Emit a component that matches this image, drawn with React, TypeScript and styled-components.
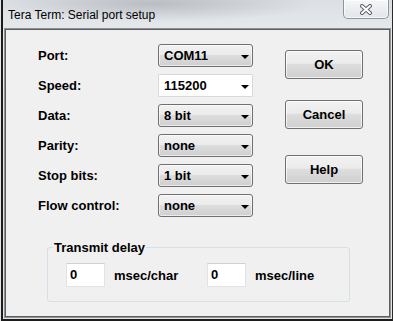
import React from "react";
import styled, { createGlobalStyle } from "styled-components";

const Global = createGlobalStyle`
  html, body { margin: 0; padding: 0; background: #e4e7ea; }
  body { font-family: "Liberation Sans", Arial, sans-serif; }
  * { box-sizing: border-box; }
`;

const Window = styled.div`
  width: 392px;
  height: 321px;
  margin-left: 1px;
  display: flex;
  flex-direction: column;
  border-left: 2px solid #1c1c1c;
  border-right: 1px solid #2a2a2a;
  border-bottom: 2px solid #1c1c1c;
  background:
    radial-gradient(ellipse 160px 18px at 150px 4px, rgba(120, 124, 130, 0.35), rgba(120, 124, 130, 0) 100%),
    linear-gradient(#dcdfe3 0px, #e6e9ec 30px, #e2e5e8 100%);
`;

const TitleBar = styled.div`
  height: 29px;
  flex: none;
  display: flex;
  align-items: flex-start;
  justify-content: space-between;
  padding-left: 5px;
  padding-right: 3px;
`;

const Title = styled.div`
  margin-top: 8px;
  font-size: 12px;
  line-height: 14px;
  color: #000;
`;

const CloseButton = styled.div`
  width: 46px;
  height: 19px;
  display: flex;
  align-items: center;
  justify-content: center;
  border: 1px solid #8e949b;
  border-top: none;
  border-radius: 0 0 5px 5px;
  background: linear-gradient(#f6f7f8, #e9ecef 60%, #e2e5e9);
  box-shadow: inset 0 0 0 1px rgba(255, 255, 255, 0.7);
`;

const Client = styled.div`
  flex: 1;
  margin: 0 2px 2px 2px;
  border: 1px solid #5e5e5e;
  box-shadow: 0 0 0 1px #8f9296;
  background: #f0f0f0;
  padding: 14px 0 0 32px;
  display: flex;
  flex-direction: column;
  font-size: 13px;
  font-weight: bold;
  color: #000;
`;

const TopSection = styled.div`
  display: flex;
  align-items: flex-start;
`;

const Form = styled.div`
  display: grid;
  grid-template-columns: 120px 95px;
  grid-auto-rows: 23px;
  row-gap: 7px;
  align-items: center;
`;

const Label = styled.div`
  line-height: 15px;
`;

const Combo = styled.div<{ $edit?: boolean }>`
  height: 23px;
  display: flex;
  align-items: center;
  justify-content: space-between;
  padding: 0 3px 0 5px;
  line-height: 15px;
  border: 1px solid ${(p) => (p.$edit ? "#d6d9de" : "#707070")};
  border-radius: ${(p) => (p.$edit ? "1px" : "3px")};
  background: ${(p) =>
    p.$edit
      ? "#ffffff"
      : "linear-gradient(#f2f2f2 0%, #ebebeb 45%, #dddddd 50%, #cfcfcf 100%)"};
  box-shadow: ${(p) => (p.$edit ? "none" : "inset 0 0 0 1px rgba(255,255,255,0.6)")};
`;

const Arrow = styled.span`
  width: 0;
  height: 0;
  margin-top: 2px;
  border-left: 4px solid transparent;
  border-right: 4px solid transparent;
  border-top: 4px solid #000;
`;

const Buttons = styled.div`
  display: flex;
  flex-direction: column;
  margin-left: 32px;
`;

const Button = styled.div<{ $gap: number }>`
  width: 78px;
  height: 29px;
  margin-top: ${(p) => p.$gap}px;
  display: flex;
  align-items: center;
  justify-content: center;
  border: 1px solid #707070;
  border-radius: 3px;
  background: linear-gradient(#f2f2f2 0%, #ebebeb 45%, #dddddd 50%, #cfcfcf 100%);
  box-shadow: inset 0 0 0 1px rgba(255, 255, 255, 0.7);
`;

const Group = styled.fieldset`
  margin: 23px 0 0 9px;
  width: 303px;
  height: 62px;
  padding: 0 0 0 5px;
  border: 1px solid #d5dfe5;
  border-radius: 3px;
  min-width: 0;
`;

const Legend = styled.legend`
  padding: 0 1px;
  line-height: 15px;
`;

const DelayRow = styled.div`
  display: grid;
  grid-template-columns: 141px auto;
  margin: 8px 0 0 13px;
`;

const DelayField = styled.div`
  display: flex;
  align-items: center;
  gap: 9px;
`;

const Edit = styled.div`
  width: 39px;
  height: 24px;
  padding: 3px 0 0 3px;
  line-height: 15px;
  background: #fff;
  border: 1px solid #e2e3ea;
  border-top-color: #cfd1d6;
`;

const CloseIcon = () => (
  <svg width="14" height="11" viewBox="0 0 14 11">
    <path d="M3 2 L11 9 M11 2 L3 9" stroke="#5d6168" strokeWidth="4" strokeLinecap="round" />
    <path d="M3 2 L11 9 M11 2 L3 9" stroke="#ffffff" strokeWidth="2" strokeLinecap="round" />
  </svg>
);

const rows: { label: string; value: string; edit?: boolean }[] = [
  { label: "Port:", value: "COM11" },
  { label: "Speed:", value: "115200", edit: true },
  { label: "Data:", value: "8 bit" },
  { label: "Parity:", value: "none" },
  { label: "Stop bits:", value: "1 bit" },
  { label: "Flow control:", value: "none" },
];

export default function App() {
  return (
    <>
      <Global />
      <Window>
        <TitleBar>
          <Title>Tera Term: Serial port setup</Title>
          <CloseButton>
            <CloseIcon />
          </CloseButton>
        </TitleBar>
        <Client>
          <TopSection>
            <Form>
              {rows.map((r) => (
                <React.Fragment key={r.label}>
                  <Label>{r.label}</Label>
                  <Combo $edit={r.edit}>
                    <span>{r.value}</span>
                    <Arrow />
                  </Combo>
                </React.Fragment>
              ))}
            </Form>
            <Buttons>
              <Button $gap={6}>OK</Button>
              <Button $gap={21}>Cancel</Button>
              <Button $gap={26}>Help</Button>
            </Buttons>
          </TopSection>
          <Group>
            <Legend>Transmit delay</Legend>
            <DelayRow>
              <DelayField>
                <Edit>0</Edit>
                <span>msec/char</span>
              </DelayField>
              <DelayField>
                <Edit>0</Edit>
                <span>msec/line</span>
              </DelayField>
            </DelayRow>
          </Group>
        </Client>
      </Window>
    </>
  );
}
